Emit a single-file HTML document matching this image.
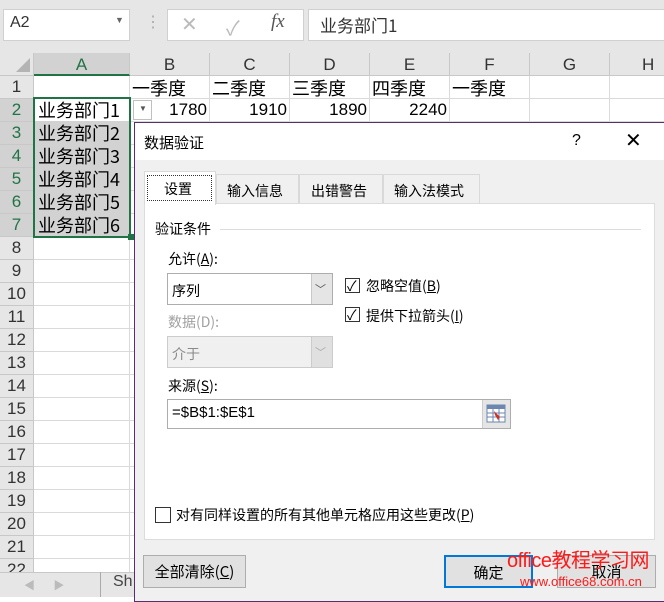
<!DOCTYPE html>
<html><head><meta charset="utf-8"><style>
*{margin:0;padding:0;box-sizing:border-box}
body{width:664px;height:597px;overflow:hidden;background:#fff;position:relative;font-family:"Liberation Sans","Noto Sans CJK SC",sans-serif;color:#000}
.a{position:absolute}
.t{position:absolute;white-space:nowrap}
.cjk{font-family:"Noto Sans CJK SC","Liberation Sans",sans-serif}
.ch{position:absolute;top:53px;height:23px;background:#e6e6e6;border-right:1px solid #c8c8c8;border-bottom:1px solid #c8c8c8;font-size:17px;text-align:center;line-height:23px;color:#333}
.rh{position:absolute;left:0;width:34px;height:23px;background:#e6e6e6;border-bottom:1px solid #c8c8c8;border-right:1px solid #c8c8c8;font-size:17px;text-align:center;line-height:22px;color:#333}
.hl{position:absolute;height:1px;background:#dadada;left:34px;right:0}
.vl{position:absolute;width:1px;background:#dadada;top:76px;bottom:0}
.cell{position:absolute;font-size:18px;line-height:22px}
.num{position:absolute;font-size:17px;line-height:22px}
.cb{position:absolute;width:15px;height:15px;border:1px solid #333;background:#fff}
.btn{position:absolute;height:33px;border:1px solid #adadad;background:#e1e1e1;font-size:15px;text-align:center;line-height:31px}
</style></head><body>
<div class="a" style="left:0;top:0;width:664px;height:53px;background:#e6e6e6"></div>
<div class="a" style="left:3px;top:9px;width:127px;height:32px;background:#fff;border:1px solid #d0d0d0"></div>
<div class="t" style="left:10px;top:14px;font-size:16px;color:#333">A2</div>
<div class="t" style="left:115px;top:15px;font-size:9px;color:#666">▼</div>
<div class="t" style="left:145px;top:12px;font-size:16px;color:#aaa">⋮</div>
<div class="a" style="left:167px;top:9px;width:137px;height:32px;background:#fff;border:1px solid #d0d0d0"></div>
<div class="t" style="left:181px;top:12px;font-size:20px;color:#bbb">✕</div>
<div class="t" style="left:226px;top:12px;font-size:20px;color:#bbb">✓</div>
<div class="t" style="left:271px;top:11px;font-size:19px;color:#555;font-style:italic;font-family:'Liberation Serif',serif">fx</div>
<div class="a" style="left:308px;top:9px;width:370px;height:32px;background:#fff;border:1px solid #d0d0d0"></div>
<div class="t cjk" style="left:320px;top:12px;font-size:17px;color:#333">业务部门1</div>
<div class="a" style="left:0;top:53px;width:34px;height:23px;background:#e6e6e6;border-right:1px solid #c8c8c8;border-bottom:1px solid #c8c8c8"></div>
<div class="a" style="left:16px;top:58px;width:0;height:0;border-left:14px solid transparent;border-bottom:14px solid #b4b4b4"></div>
<div class="ch" style="left:34px;width:96px;background:#d2d2d2;color:#217346;border-bottom:2px solid #217346">A</div>
<div class="ch" style="left:130px;width:80px">B</div>
<div class="ch" style="left:210px;width:80px">C</div>
<div class="ch" style="left:290px;width:80px">D</div>
<div class="ch" style="left:370px;width:80px">E</div>
<div class="ch" style="left:450px;width:80px">F</div>
<div class="ch" style="left:530px;width:80px">G</div>
<div class="ch" style="left:610px;width:80px;text-align:left;padding-left:32px">H</div>
<div class="vl" style="left:129px"></div><div class="vl" style="left:209px"></div><div class="vl" style="left:289px"></div><div class="vl" style="left:369px"></div><div class="vl" style="left:449px"></div><div class="vl" style="left:529px"></div><div class="vl" style="left:609px"></div>
<div class="hl" style="top:98px"></div><div class="hl" style="top:121px"></div><div class="hl" style="top:144px"></div><div class="hl" style="top:167px"></div><div class="hl" style="top:190px"></div><div class="hl" style="top:213px"></div><div class="hl" style="top:236px"></div><div class="hl" style="top:259px"></div><div class="hl" style="top:282px"></div><div class="hl" style="top:305px"></div><div class="hl" style="top:328px"></div><div class="hl" style="top:351px"></div><div class="hl" style="top:374px"></div><div class="hl" style="top:397px"></div><div class="hl" style="top:420px"></div><div class="hl" style="top:443px"></div><div class="hl" style="top:466px"></div><div class="hl" style="top:489px"></div><div class="hl" style="top:512px"></div><div class="hl" style="top:535px"></div><div class="hl" style="top:558px"></div>
<div class="rh" style="top:76px">1</div>
<div class="rh" style="top:99px;background:#d2d2d2;color:#217346">2</div>
<div class="rh" style="top:122px;background:#d2d2d2;color:#217346">3</div>
<div class="rh" style="top:145px;background:#d2d2d2;color:#217346">4</div>
<div class="rh" style="top:168px;background:#d2d2d2;color:#217346">5</div>
<div class="rh" style="top:191px;background:#d2d2d2;color:#217346">6</div>
<div class="rh" style="top:214px;background:#d2d2d2;color:#217346">7</div>
<div class="rh" style="top:237px">8</div><div class="rh" style="top:260px">9</div><div class="rh" style="top:283px">10</div><div class="rh" style="top:306px">11</div><div class="rh" style="top:329px">12</div><div class="rh" style="top:352px">13</div><div class="rh" style="top:375px">14</div><div class="rh" style="top:398px">15</div><div class="rh" style="top:421px">16</div><div class="rh" style="top:444px">17</div><div class="rh" style="top:467px">18</div><div class="rh" style="top:490px">19</div><div class="rh" style="top:513px">20</div><div class="rh" style="top:536px">21</div><div class="rh" style="top:559px">22</div>
<div class="a" style="left:34px;top:121px;width:96px;height:116px;background:#d2d2d2"></div>
<div class="a" style="left:33px;top:97px;width:98px;height:141px;border:2px solid #217346"></div>
<div class="a" style="left:128px;top:234px;width:6px;height:6px;background:#217346"></div>
<div class="cell cjk" style="left:38px;top:99px">业务部门1</div>
<div class="cell cjk" style="left:38px;top:122px">业务部门2</div>
<div class="cell cjk" style="left:38px;top:145px">业务部门3</div>
<div class="cell cjk" style="left:38px;top:168px">业务部门4</div>
<div class="cell cjk" style="left:38px;top:191px">业务部门5</div>
<div class="cell cjk" style="left:38px;top:214px">业务部门6</div>
<div class="a" style="left:133px;top:100px;width:19px;height:20px;background:#fff;border:1px solid #c0c0c0"></div>
<div class="t" style="left:139px;top:104px;font-size:8px;color:#555">▼</div>
<div class="cell cjk" style="left:132px;top:77px">一季度</div>
<div class="cell cjk" style="left:212px;top:77px">二季度</div>
<div class="cell cjk" style="left:292px;top:77px">三季度</div>
<div class="cell cjk" style="left:372px;top:77px">四季度</div>
<div class="cell cjk" style="left:452px;top:77px">一季度</div>
<div class="num" style="left:130px;top:99px;width:77px;text-align:right">1780</div>
<div class="num" style="left:210px;top:99px;width:77px;text-align:right">1910</div>
<div class="num" style="left:290px;top:99px;width:77px;text-align:right">1890</div>
<div class="num" style="left:370px;top:99px;width:77px;text-align:right">2240</div>
<div class="a" style="left:0;top:572px;width:140px;height:25px;background:#e6e6e6;border-top:1px solid #c8c8c8"></div>
<div class="t" style="left:24px;top:577px;font-size:11px;color:#bbb">◀ &nbsp;&nbsp;&nbsp;&nbsp; ▶</div>
<div class="a" style="left:100px;top:572px;width:1px;height:25px;background:#aaa"></div>
<div class="t" style="left:113px;top:573px;font-size:16px;color:#444">Sh</div>
<div class="a" style="left:134px;top:122px;width:540px;height:480px;background:#f0f0f0;border:1px solid #5c2d6e"></div>
<div class="a" style="left:135px;top:123px;width:540px;height:37px;background:#fff"></div>
<div class="t cjk" style="left:144px;top:132px;font-size:15px">数据验证</div>
<div class="t" style="left:572px;top:132px;font-size:16px">?</div>
<div class="t" style="left:625px;top:128px;font-size:20px;font-weight:300">✕</div>
<div class="a" style="left:144px;top:203px;width:511px;height:337px;background:#fff;border:1px solid #dcdcdc"></div>
<div class="a" style="left:216px;top:174px;width:83px;height:29px;background:#f0f0f0;border:1px solid #d9d9d9;border-bottom:none"></div>
<div class="a" style="left:299px;top:174px;width:84px;height:29px;background:#f0f0f0;border:1px solid #d9d9d9;border-bottom:none"></div>
<div class="a" style="left:383px;top:174px;width:97px;height:29px;background:#f0f0f0;border:1px solid #d9d9d9;border-bottom:none"></div>
<div class="a" style="left:144px;top:171px;width:72px;height:34px;background:#fff;border:1px solid #d9d9d9;border-bottom:none"></div>
<div class="a" style="left:147px;top:175px;width:65px;height:26px;border:1px dotted #333"></div>
<div class="t cjk" style="left:164px;top:179px;font-size:14px">设置</div>
<div class="t cjk" style="left:227px;top:181px;font-size:14px">输入信息</div>
<div class="t cjk" style="left:311px;top:181px;font-size:14px">出错警告</div>
<div class="t cjk" style="left:394px;top:181px;font-size:14px">输入法模式</div>
<div class="t cjk" style="left:155px;top:219px;font-size:14px">验证条件</div>
<div class="a" style="left:220px;top:229px;width:421px;height:1px;background:#dcdcdc"></div>
<div class="t cjk" style="left:168px;top:249px;font-size:14px">允许(<u>A</u>):</div>
<div class="a" style="left:167px;top:273px;width:166px;height:32px;border:1px solid #adadad;background:#fff"></div>
<div class="a" style="left:311px;top:274px;width:21px;height:30px;background:#e5e5e5;border-left:1px solid #c8c8c8"></div>
<div class="t" style="left:315px;top:281px;font-size:11px;color:#555">﹀</div>
<div class="t cjk" style="left:172px;top:281px;font-size:14px">序列</div>
<div class="t cjk" style="left:168px;top:312px;font-size:14px;color:#a0a0a0">数据(D):</div>
<div class="a" style="left:167px;top:336px;width:166px;height:32px;border:1px solid #cccccc;background:#f0f0f0"></div>
<div class="a" style="left:311px;top:337px;width:21px;height:30px;background:#e0e0e0;border-left:1px solid #ccc"></div>
<div class="t" style="left:315px;top:344px;font-size:11px;color:#aaa">﹀</div>
<div class="t cjk" style="left:172px;top:344px;font-size:14px;color:#8a8a8a">介于</div>
<div class="cb" style="left:345px;top:278px"></div><div class="t" style="left:347px;top:276px;font-size:14px">✓</div>
<div class="t cjk" style="left:366px;top:276px;font-size:14px">忽略空值(<u>B</u>)</div>
<div class="cb" style="left:345px;top:307px"></div><div class="t" style="left:347px;top:305px;font-size:14px">✓</div>
<div class="t cjk" style="left:366px;top:306px;font-size:14px">提供下拉箭头(<u>I</u>)</div>
<div class="t cjk" style="left:168px;top:376px;font-size:14px">来源(<u>S</u>):</div>
<div class="a" style="left:167px;top:399px;width:344px;height:30px;border:1px solid #adadad;background:#fff"></div>
<div class="t" style="left:172px;top:404px;font-size:15px">=$B$1:$E$1</div>
<div class="a" style="left:482px;top:400px;width:28px;height:28px;background:#e5e5e5;border-left:1px solid #ccc"></div>
<svg class="a" style="left:486px;top:404px" width="20" height="20"><rect x="1" y="1" width="18" height="17" fill="#fff" stroke="#6b86b0"/><rect x="1" y="1" width="18" height="4" fill="#6b86b0"/><line x1="1" y1="9" x2="19" y2="9" stroke="#6b86b0"/><line x1="1" y1="13" x2="19" y2="13" stroke="#6b86b0"/><line x1="7" y1="1" x2="7" y2="18" stroke="#6b86b0"/><line x1="13" y1="1" x2="13" y2="18" stroke="#6b86b0"/><path d="M8 7 L14 13 L12 16 L9 11Z" fill="#d03020"/></svg>
<div class="cb" style="left:155px;top:507px;width:16px;height:16px"></div>
<div class="t cjk" style="left:176px;top:505px;font-size:14px">对有同样设置的所有其他单元格应用这些更改(<u>P</u>)</div>
<div class="btn cjk" style="left:143px;top:555px;width:103px">全部清除(<u>C</u>)</div>
<div class="btn cjk" style="left:444px;top:555px;width:89px;border:2px solid #0078d7">确定</div>
<div class="btn cjk" style="left:557px;top:555px;width:99px">取消</div>
<div class="t" style="left:507px;top:544px;font-size:20px;color:#ff1a1a;letter-spacing:-0.5px">office教程学习网</div>
<div class="t" style="left:520px;top:574px;font-size:13px;color:#ff1a1a">www.office68.com.cn</div>
</body></html>
